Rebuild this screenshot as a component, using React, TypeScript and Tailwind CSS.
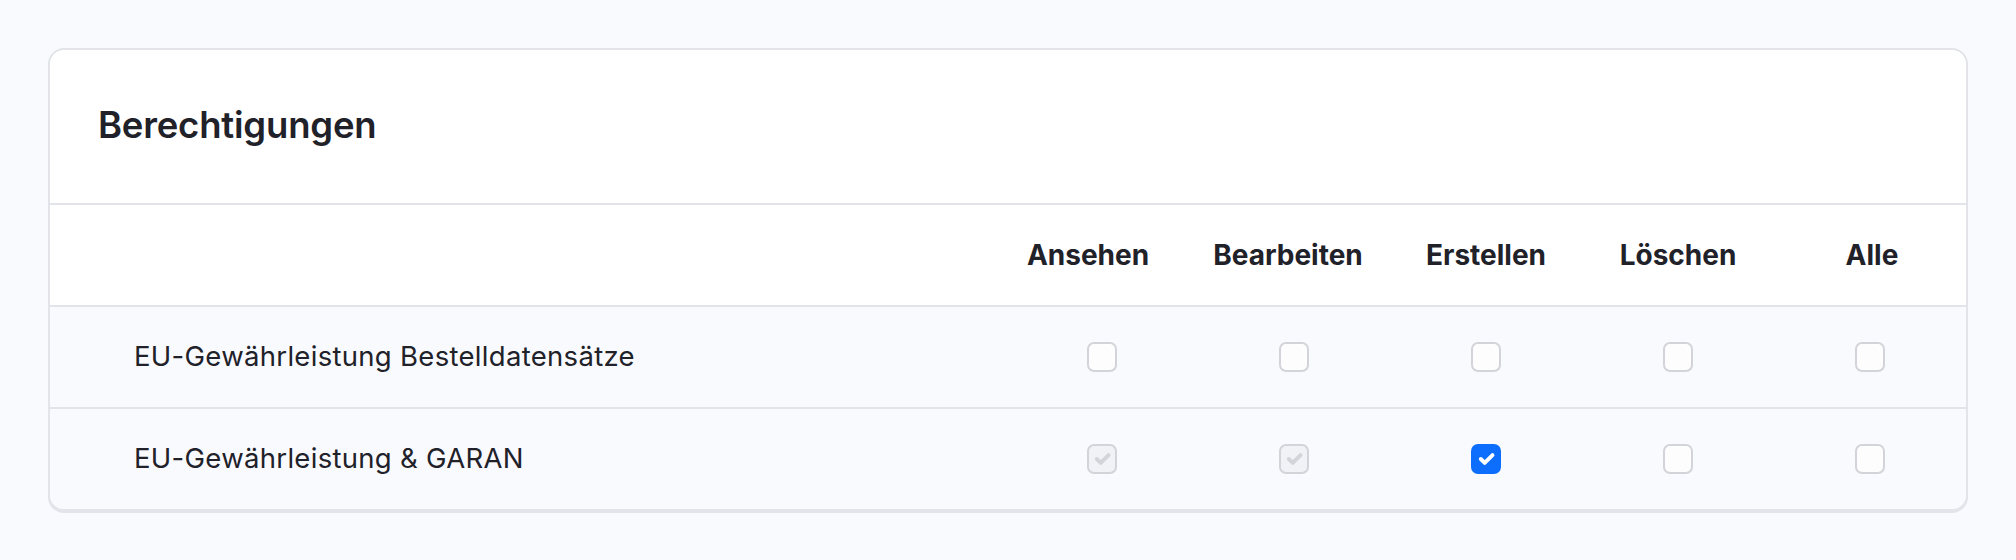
import React from 'react';

type Perm = 'none' | 'locked' | 'checked';

interface Row {
    label: string;
    perms: Perm[];
}

const columns = [
    { label: 'Ansehen', cls: 'pr-[28px]' },
    { label: 'Bearbeiten', cls: 'pr-[12px]' },
    { label: 'Erstellen', cls: '' },
    { label: 'Löschen', cls: '' },
    { label: 'Alle', cls: 'pl-[4px]' },
];

const rows: Row[] = [
    { label: 'EU-Gewährleistung Bestelldatensätze', perms: ['none', 'none', 'none', 'none', 'none'] },
    { label: 'EU-Gewährleistung & GARAN', perms: ['locked', 'locked', 'checked', 'none', 'none'] },
];

const Check: React.FC<{ color: string }> = ({ color }) => (
    <svg viewBox="0 0 20 20" className="w-full h-full" fill="none">
        <path d="m6 10 3 3 6-6" stroke={color} strokeWidth="3" strokeLinecap="round" strokeLinejoin="round" />
    </svg>
);

const Box: React.FC<{ state: Perm }> = ({ state }) => {
    if (state === 'checked') {
        return (
            <span className="w-[30px] h-[30px] rounded-[7px] bg-[#0d6efd] border-2 border-[#0d6efd] flex">
                <Check color="#ffffff" />
            </span>
        );
    }
    if (state === 'locked') {
        return (
            <span className="w-[30px] h-[30px] rounded-[7px] bg-[#f1f2f5] border-2 border-[#d2d4d9] flex">
                <Check color="#d2d4d9" />
            </span>
        );
    }
    return <span className="w-[30px] h-[30px] rounded-[7px] bg-[#fdfdfe] border-2 border-[#d2d4d9] block" />;
};

const grid = 'grid grid-cols-[1fr_192px_192px_192px_192px_192px]';

export default function App() {
    return (
        <div className="min-h-screen bg-[#f9fafe] p-[48px] font-['Inter',sans-serif] text-[#212129]">
            <div className="bg-white border-2 border-[#e3e4e9] rounded-[16px] overflow-hidden shadow-[0_2px_0_#e3e4e9]">
                <div className="h-[155px] flex items-center pl-[48px] pb-[2px] border-b-2 border-[#e3e4e9]">
                    <h2 className="text-[36.5px] font-semibold tracking-[-0.2px]">Berechtigungen</h2>
                </div>

                <div className={`${grid} h-[102px] border-b-2 border-[#e3e4e9] items-center`}>
                    <div />
                    {columns.map(c => (
                        <div key={c.label} className={`text-center text-[28px] font-bold ${c.cls}`}>
                            {c.label}
                        </div>
                    ))}
                </div>

                {rows.map((row, i) => {
                    const last = i === rows.length - 1;
                    return (
                        <div
                            key={row.label}
                            className={`${grid} bg-[#f9fafe] items-center ${last ? 'h-[100px]' : 'h-[102px] border-b-2 border-[#e3e4e9]'}`}
                        >
                            <div className="pl-[84px] text-[27.5px] tracking-[0.3px]">{row.label}</div>
                            {row.perms.map((p, j) => (
                                <div key={j} className="flex justify-center">
                                    <Box state={p} />
                                </div>
                            ))}
                        </div>
                    );
                })}
            </div>
        </div>
    );
}
